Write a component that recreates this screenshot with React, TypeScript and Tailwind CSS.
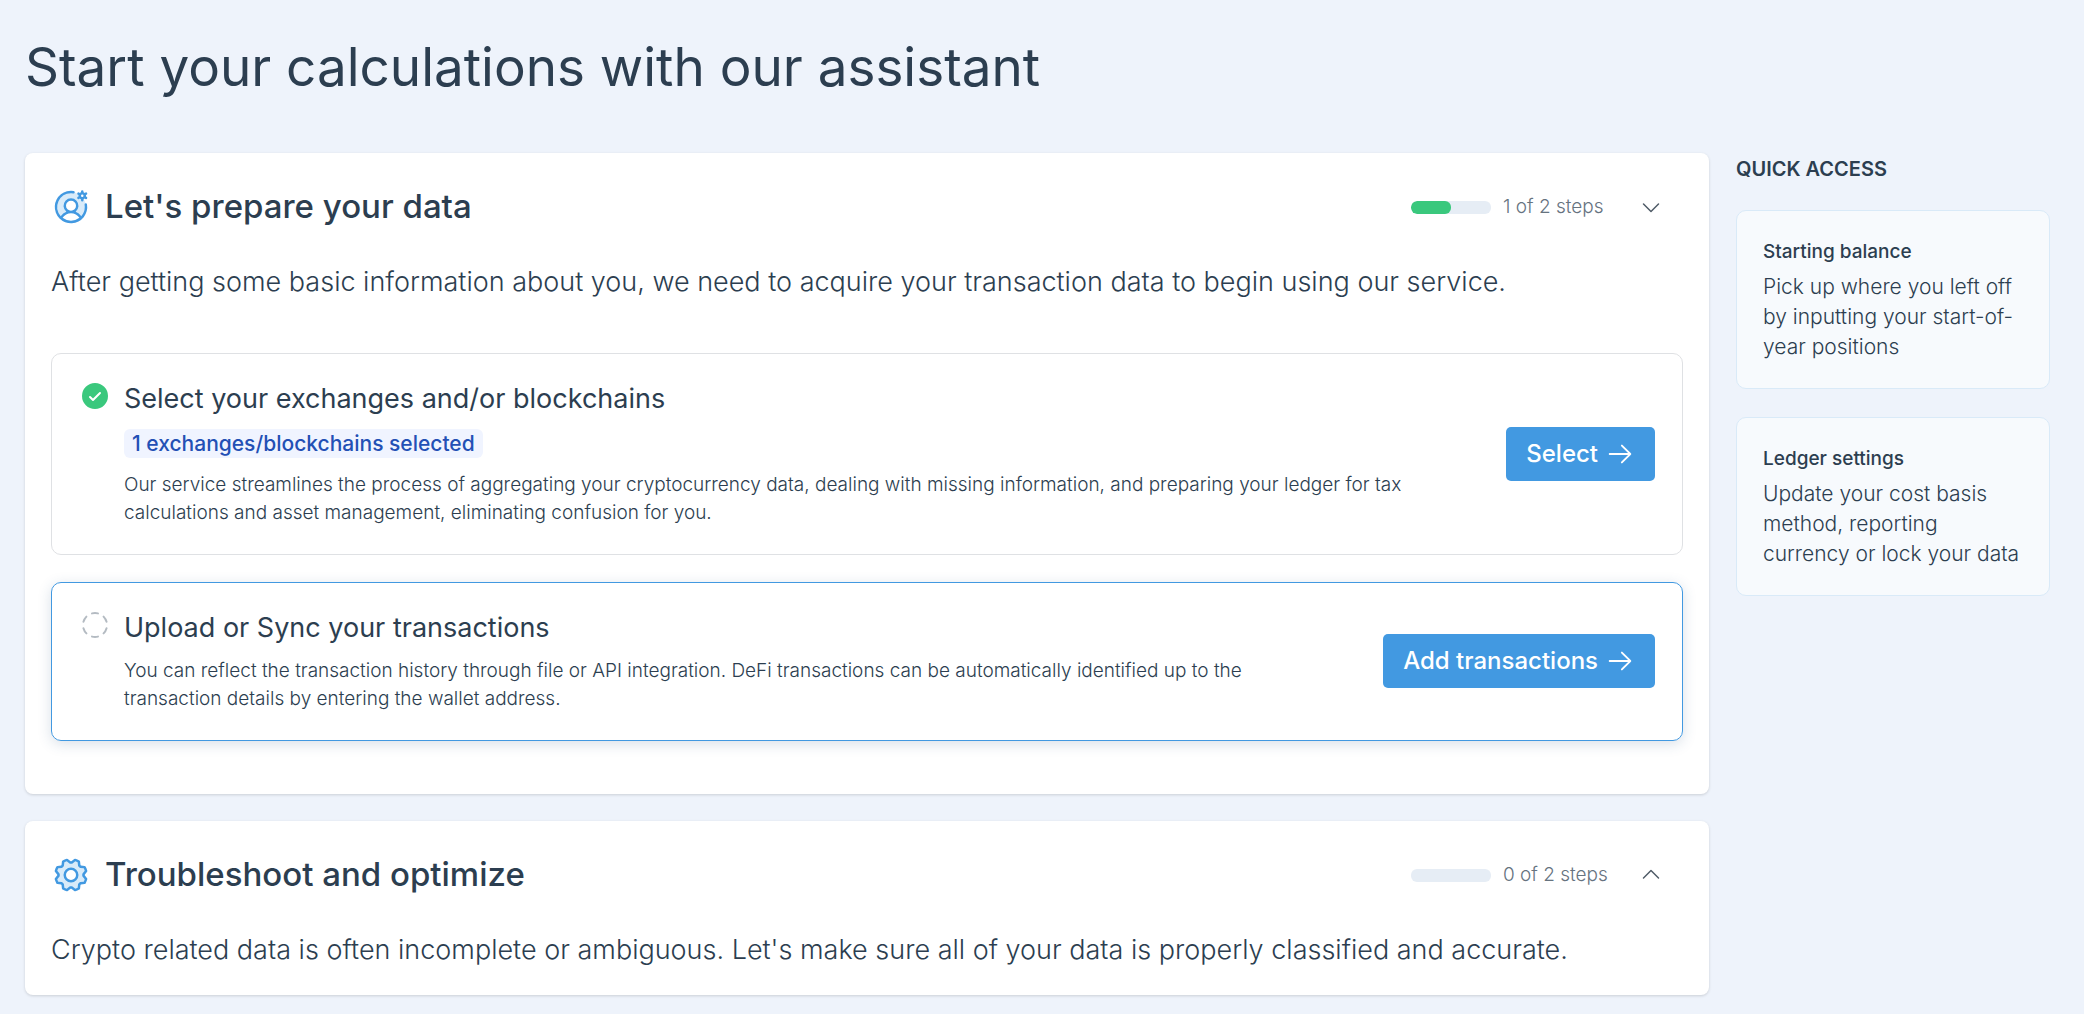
import type { ReactNode } from 'react';
import type { IconType } from 'react-icons';
import {
  PiArrowRight,
  PiCaretDown,
  PiCaretUp,
  PiCheckCircleFill,
  PiCircleDashed,
  PiGearDuotone,
  PiUserCircleGearDuotone,
} from 'react-icons/pi';

interface Step {
  title: string;
  badge?: string;
  description: string;
  action: string;
  done: boolean;
}

const steps: Step[] = [
  {
    title: 'Select your exchanges and/or blockchains',
    badge: '1 exchanges/blockchains selected',
    description:
      'Our service streamlines the process of aggregating your cryptocurrency data, dealing with missing information, and preparing your ledger for tax calculations and asset management, eliminating confusion for you.',
    action: 'Select',
    done: true,
  },
  {
    title: 'Upload or Sync your transactions',
    description:
      'You can reflect the transaction history through file or API integration. DeFi transactions can be automatically identified up to the transaction details by entering the wallet address.',
    action: 'Add transactions',
    done: false,
  },
];

const quickLinks = [
  { title: 'Starting balance', text: 'Pick up where you left off by inputting your start-of-year positions' },
  { title: 'Ledger settings', text: 'Update your cost basis method, reporting currency or lock your data' },
];

// Progress bar with the "x of y steps" label
function StepProgress({ done, total }: { done: number; total: number }) {
  return (
    <div className="flex items-center gap-3">
      <div className="h-[13px] w-20 overflow-hidden rounded-md bg-[#e6edf5]">
        <div className="h-full rounded-md bg-[#3ac87d]" style={{ width: `${(done / total) * 100}%` }} />
      </div>
      <span className="w-26 text-[19px] font-light whitespace-nowrap text-[#66737f]">
        {done} of {total} steps
      </span>
    </div>
  );
}

interface SectionProps {
  icon: IconType;
  title: string;
  intro: string;
  done: number;
  open: boolean;
  children?: ReactNode;
}

function Section({ icon: Icon, title, intro, done, open, children }: SectionProps) {
  const Caret = open ? PiCaretDown : PiCaretUp;

  return (
    <section className="rounded-lg bg-white px-[26px] pt-7 pb-[25px] shadow-[0_1px_3px_rgba(0,0,0,0.15)]">
      <header className="flex h-[52px] items-center justify-between">
        <div className="flex items-center gap-[14px]">
          <Icon className="size-10 text-[#4299e1]" />
          <h2 className="text-[33px] font-medium">{title}</h2>
        </div>
        <div className="flex items-center gap-8 pr-5">
          <StepProgress done={done} total={2} />
          <button type="button" aria-label={`Toggle ${title}`} aria-expanded={open} className="cursor-pointer">
            <Caret className="size-6 text-[#4f5b67]" />
          </button>
        </div>
      </header>
      <p className="mt-[29px] text-[27px] leading-10 font-light">{intro}</p>
      {children}
    </section>
  );
}

function StepCard({ step }: { step: Step }) {
  return (
    <article
      className={`flex items-center justify-between gap-20 rounded-[10px] border px-[27px] pt-[26px] pb-[27px] ${
        step.done ? 'border-[#dfe1e4]' : 'border-[#4299e1] shadow-[0_3px_14px_rgba(44,82,130,0.18)]'
      }`}
    >
      <div className="flex items-start gap-[13px]">
        {step.done ? (
          <PiCheckCircleFill className="size-8 shrink-0 text-[#3ac87d]" />
        ) : (
          <PiCircleDashed className="size-8 shrink-0 text-[#b4bbc2]" />
        )}
        <div className="flex flex-col items-start">
          <h3 className="text-[27px] leading-[38px]">{step.title}</h3>
          {step.badge && (
            <span className="mt-[11px] mb-[3px] rounded-md bg-[#f0f4ff] px-2 text-[21px] leading-[29px] font-medium text-[#2350b5]">
              {step.badge}
            </span>
          )}
          <p className="mt-[10px] text-[19px] leading-7 font-light">{step.description}</p>
        </div>
      </div>
      <button
        type="button"
        className="flex h-[54px] shrink-0 cursor-pointer items-center gap-[7px] rounded-[5px] bg-[#4299e1] px-5 text-2xl font-medium text-white"
      >
        {step.action}
        <PiArrowRight className="size-[30px]" />
      </button>
    </article>
  );
}

export default function App() {
  return (
    <div className="min-h-screen bg-[#eef3fb] pt-[30px] pr-[34px] pb-5 pl-[25px] font-['Inter','Liberation_Sans',sans-serif] text-[#2c3e50]">
      <h1 className="text-[53px] leading-[75px]">Start your calculations with our assistant</h1>

      <div className="mt-12 flex items-start gap-[27px]">
        <main className="flex min-w-0 flex-1 flex-col gap-[27px]">
          <Section
            icon={PiUserCircleGearDuotone}
            title="Let's prepare your data"
            intro="After getting some basic information about you, we need to acquire your transaction data to begin using our service."
            done={1}
            open
          >
            <div className="mt-[51px] mb-7 flex flex-col gap-[27px]">
              {steps.map((step) => (
                <StepCard key={step.title} step={step} />
              ))}
            </div>
          </Section>

          <Section
            icon={PiGearDuotone}
            title="Troubleshoot and optimize"
            intro="Crypto related data is often incomplete or ambiguous. Let's make sure all of your data is properly classified and accurate."
            done={0}
            open={false}
          />
        </main>

        <aside className="w-[314px] shrink-0">
          <h2 className="mb-[25px] text-[20px] leading-8 font-semibold">QUICK ACCESS</h2>
          <div className="flex flex-col gap-7">
            {quickLinks.map((link) => (
              <a key={link.title} href="#" className="block rounded-[10px] border border-[#d9eaf8] bg-[#f7fafd] p-[26px]">
                <h3 className="mb-[5px] text-[19px] leading-[30px] font-medium">{link.title}</h3>
                <p className="text-[21px] leading-[30px] font-light">{link.text}</p>
              </a>
            ))}
          </div>
        </aside>
      </div>
    </div>
  );
}
